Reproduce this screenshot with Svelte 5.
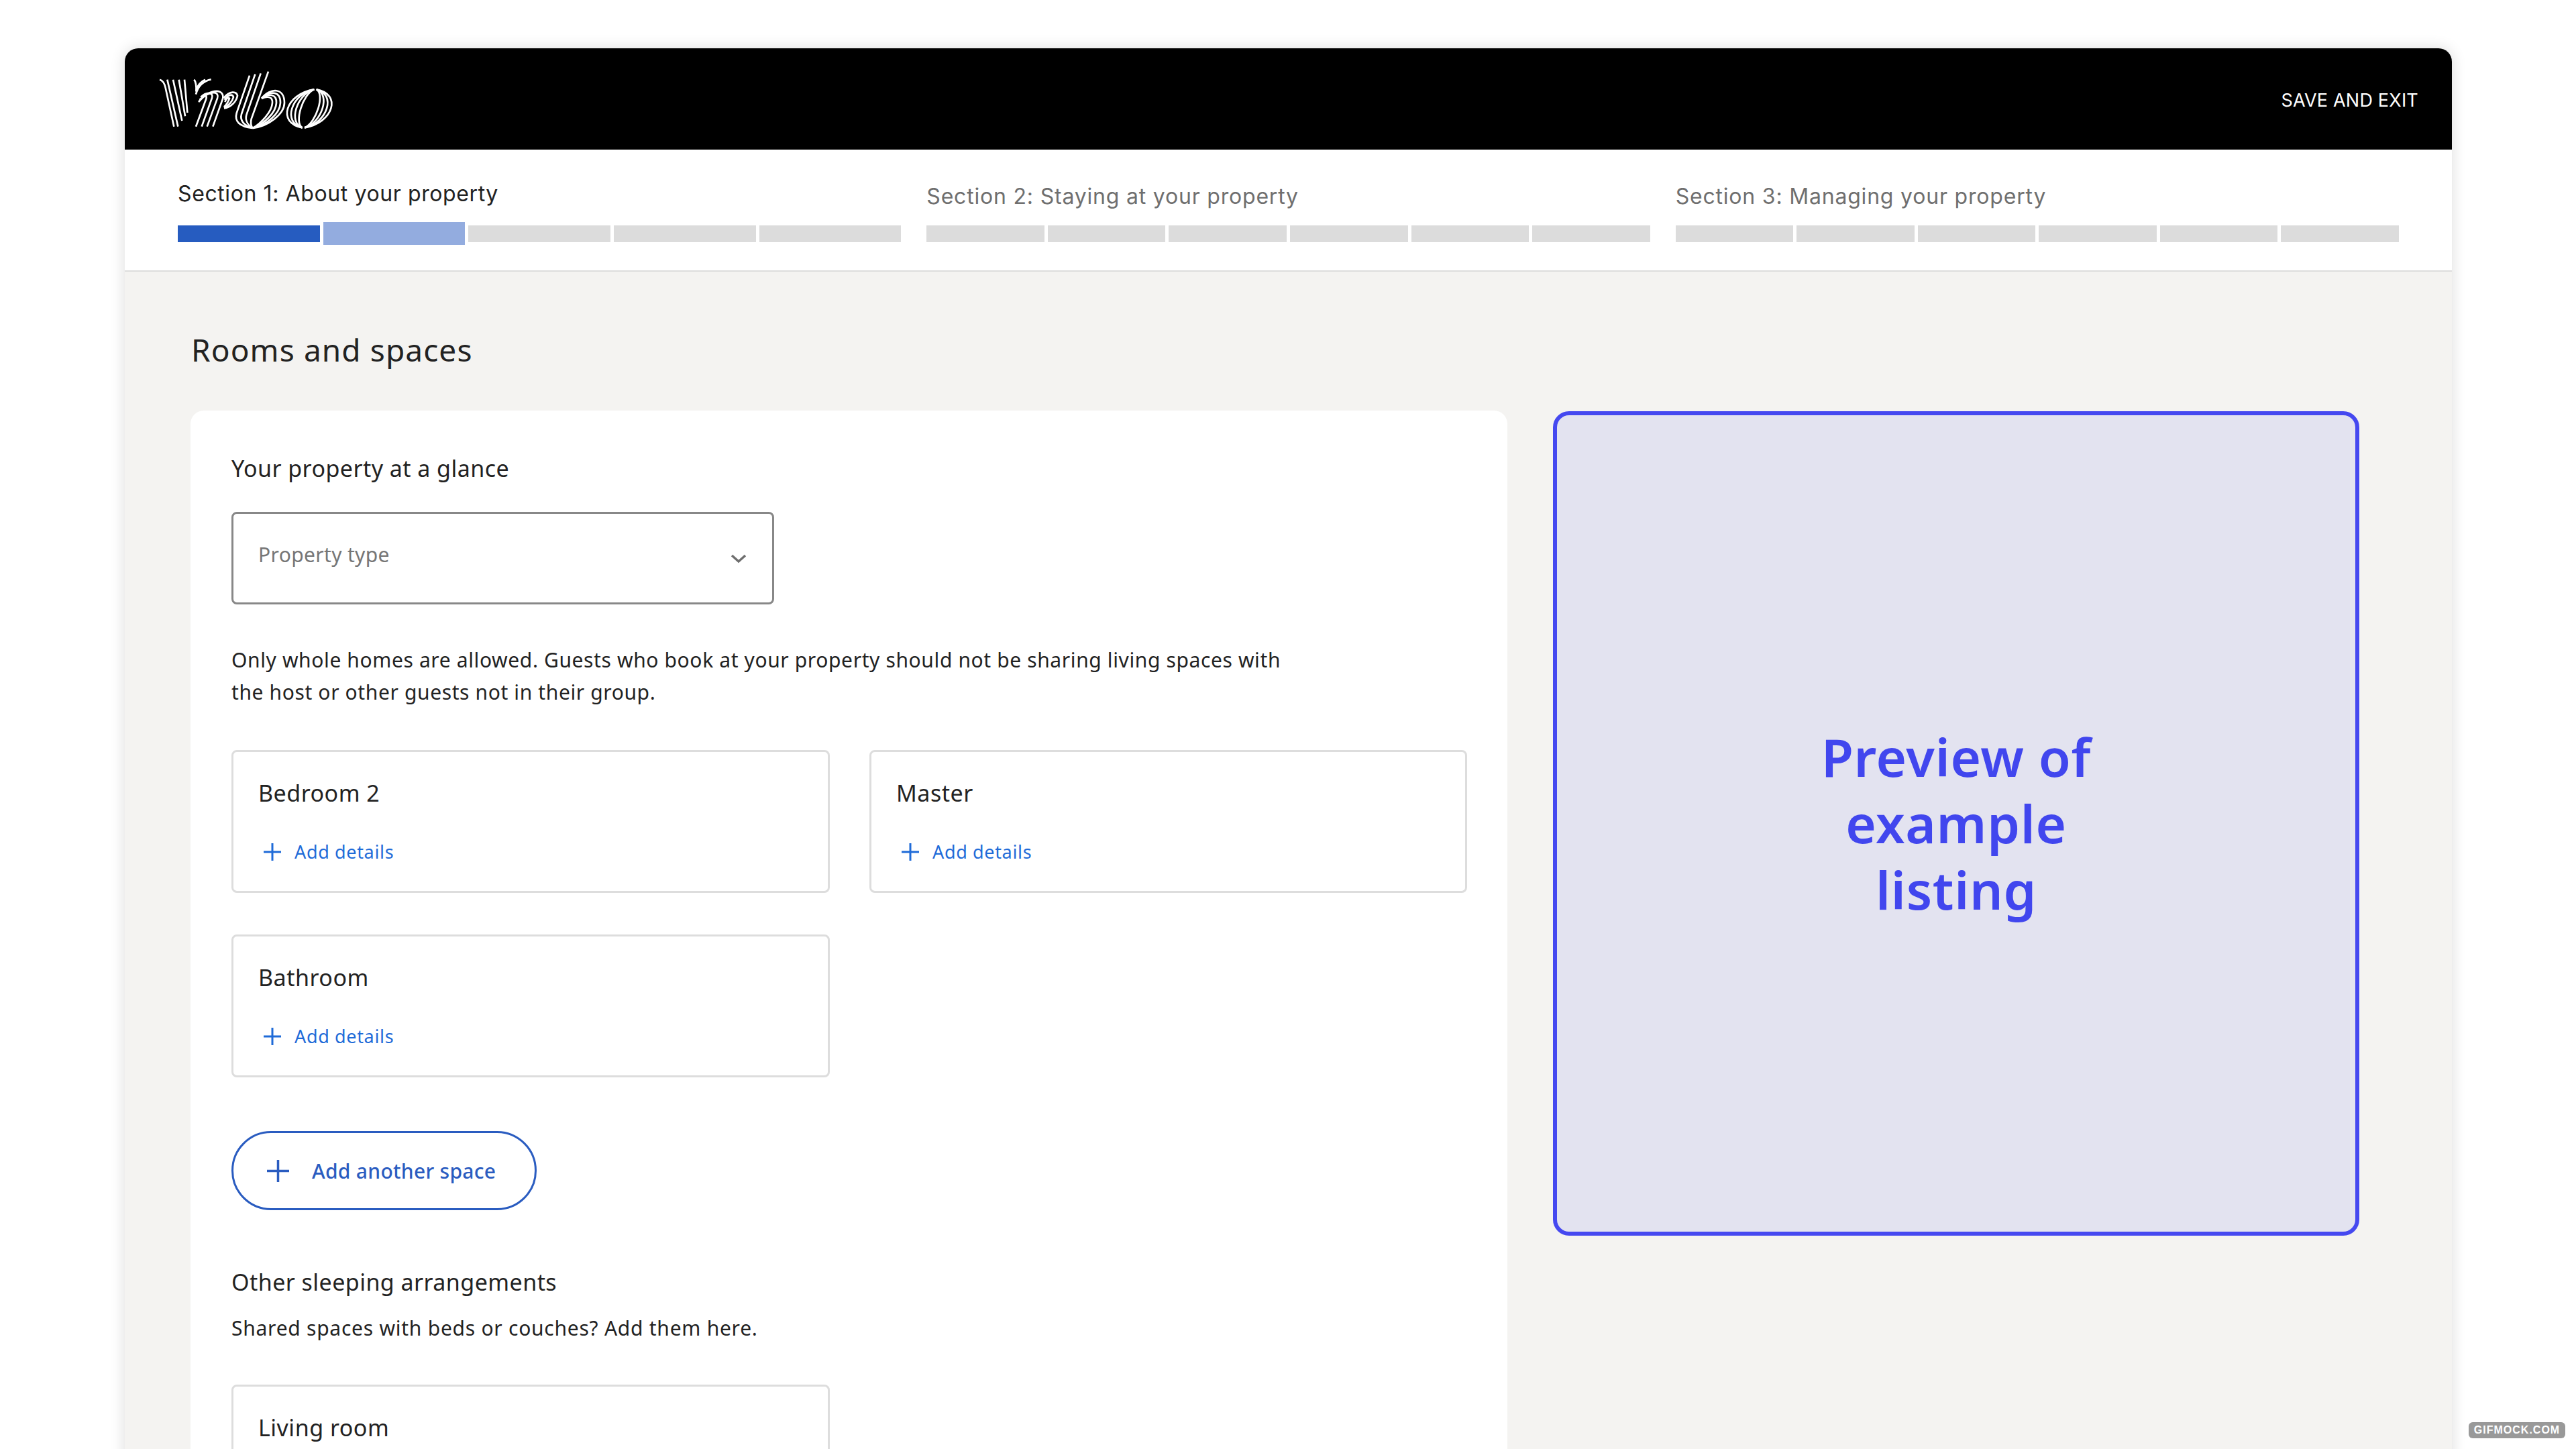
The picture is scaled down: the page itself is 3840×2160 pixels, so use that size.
<script>
  const sections = [
    { label: "Section 1: About your property", segments: 5, done: 1, current: 1 },
    { label: "Section 2: Staying at your property", segments: 6, done: 0, current: -1 },
    { label: "Section 3: Managing your property", segments: 6, done: 0, current: -1 }
  ];
  const spaces = ["Bedroom 2", "Master", "Bathroom"];

  // logo stripes, drawn in a 900x360 box
  const vStripes = [
    "M54 86 C68 90 76 104 80 122 L118 296",
    "M88 86 L136 296",
    "M114 86 L154 270",
    "M140 86 L168 250",
    "M165 86 L178 234",
    "M284 85 C250 92 226 112 216 152",
    "M258 86 C240 94 226 108 218 130",
    "M208 86 C216 96 219 110 217 140"
  ];
  const rStripes = [
    "M216 296 L262 172 C266 158 256 150 240 166",
    "M242 296 L288 168 C296 146 268 136 238 164",
    "M266 296 L312 170 C322 142 290 128 232 176",
    "M292 296 L336 172 C346 132 290 116 228 186",
    "M342 214 C372 210 396 186 402 158 C398 138 368 134 340 168",
    "M342 212 C362 204 380 182 384 164 C380 150 360 152 344 176",
    "M342 208 C354 198 364 178 366 170 C360 164 352 170 346 186"
  ];
  const bStripes = [
    "M456 68 L398 236 C388 272 410 296 470 303",
    "M481 62 L420 240 C412 268 430 292 470 303",
    "M506 58 L442 244 C436 266 446 288 470 303",
    "M540 50 L464 262 C460 278 462 292 470 303",
    "M510 170 C550 120 612 122 612 190 C612 240 540 295 470 303",
    "M510 170 C545 135 595 135 594 190 C592 240 530 290 470 303",
    "M510 170 C540 148 578 148 576 190 C574 235 520 285 470 303",
    "M510 170 C535 160 560 160 558 190 C556 228 510 280 470 303"
  ];

  // stripes of the o, each one a crescent with its widest point at x
  function crescent(x, top, bottom) {
    const sum = (8 * x - top - bottom) / 3;
    return `M${top} 130 C${sum / 2 + 20} 150 ${sum / 2 - 20} 280 ${bottom} 301`;
  }
  const oLeft = [627, 646, 665, 685].map((x) => crescent(x, 745, 692));
  const oRight = [820, 801, 782, 763].map((x) => crescent(x, 755, 702));
  const logo = [...vStripes, ...rStripes, ...bStripes, ...oLeft, ...oRight];
</script>

<div class="page">
  <div class="shell">
    <header class="topbar">
      <svg class="logo" viewBox="0 0 900 360" role="img" aria-label="Vrbo">
        {#each logo as d}
          <path {d} />
        {/each}
      </svg>
      <a class="save" href="#save">SAVE AND EXIT</a>
    </header>

    <nav class="progress">
      {#each sections as section, i}
        <div class="section" class:active={i === 0}>
          <div class="section-label">{section.label}</div>
          <div class="bars">
            {#each Array(section.segments) as _, s}
              <span class="bar" class:done={s < section.done} class:current={s === section.current}></span>
            {/each}
          </div>
        </div>
      {/each}
    </nav>

    <main class="content">
      <h1>Rooms and spaces</h1>
      <div class="columns">
        <section class="card">
          <h2>Your property at a glance</h2>
          <div class="select">
            <span>Property type</span>
            <svg viewBox="0 0 24 14" width="24" height="14">
              <path d="M2 2 L12 11 L22 2" fill="none" stroke="#6f6f6f" stroke-width="3.5" />
            </svg>
          </div>
          <p class="note">Only whole homes are allowed. Guests who book at your property should not be sharing living spaces with<br />the host or other guests not in their group.</p>

          <div class="rooms">
            {#each spaces as space}
              <div class="room">
                <div class="room-name">{space}</div>
                <a class="details" href="#details">
                  <svg viewBox="0 0 26 26" width="26" height="26">
                    <path d="M13 0 V26 M0 13 H26" stroke="#1f6bd8" stroke-width="3" />
                  </svg>
                  Add details
                </a>
              </div>
            {/each}
          </div>

          <button class="add-space">
            <svg viewBox="0 0 33 33" width="33" height="33">
              <path d="M16.5 0 V33 M0 16.5 H33" stroke="#2a5cc0" stroke-width="3.5" />
            </svg>
            Add another space
          </button>

          <h2 class="other">Other sleeping arrangements</h2>
          <p class="shared">Shared spaces with beds or couches? Add them here.</p>

          <div class="rooms">
            <div class="room">
              <div class="room-name">Living room</div>
            </div>
          </div>
        </section>

        <aside class="preview">
          <div>Preview of example listing</div>
        </aside>
      </div>
    </main>
  </div>
  <div class="watermark">GIFMOCK.COM</div>
</div>

<style>
  :global(body) {
    margin: 0;
    background: #fff;
  }

  .page {
    position: relative;
    height: 2160px;
    overflow: hidden;
    box-sizing: border-box;
    padding: 72px 185px 0 186px;
    font-family: "Noto Sans", sans-serif;
    color: #222;
  }

  .shell {
    border-radius: 20px 20px 0 0;
    background: #f4f3f1;
    box-shadow: 0 0 22px rgba(0, 0, 0, 0.14);
    height: 2200px;
  }

  .topbar {
    display: flex;
    justify-content: space-between;
    height: 151px;
    background: #000;
    border-radius: 20px 20px 0 0;
    padding: 0 50px 0 34px;
  }

  .logo {
    width: 300px;
    height: 120px;
    margin-top: 18px;
  }

  .logo path {
    fill: none;
    stroke: #fff;
    stroke-width: 8;
  }

  .save {
    color: #fff;
    text-decoration: none;
    font-family: Inter, sans-serif;
    font-size: 27px;
    letter-spacing: 0.2px;
    line-height: 40px;
    margin-top: 58px;
  }

  .progress {
    display: grid;
    grid-template-columns: repeat(3, 1fr);
    column-gap: 38px;
    align-items: center;
    box-sizing: border-box;
    height: 182px;
    padding: 6px 79px 0;
    background: #fff;
    border-bottom: 2px solid #ddd;
  }

  .section-label {
    font-family: Inter, sans-serif;
    font-size: 32px;
    letter-spacing: 0.8px;
    line-height: 44px;
    margin-bottom: 21px;
    color: #6f6f6f;
  }

  .section.active .section-label {
    color: #222;
    letter-spacing: 0.6px;
    margin-bottom: 20px;
  }

  .bars {
    display: flex;
    align-items: center;
    gap: 5px;
    height: 25px;
  }

  .section.active .bars {
    height: 34px;
  }

  .bar {
    flex: 1;
    height: 25px;
    background: #dcdcdc;
  }

  .bar.done {
    background: #265cc0;
  }

  .bar.current {
    height: 34px;
    background: #93acdf;
  }

  .content {
    padding: 86px 0 0 98px;
  }

  h1 {
    margin: 0 0 61px 1px;
    font-size: 46px;
    line-height: 60px;
    font-weight: 400;
    letter-spacing: 1.1px;
  }

  .columns {
    display: flex;
    align-items: flex-start;
    gap: 68px;
  }

  .card {
    box-sizing: border-box;
    width: 1963px;
    padding: 64px 60px 60px 61px;
    background: #fff;
    border-radius: 20px;
  }

  h2 {
    margin: 0;
    font-size: 34px;
    line-height: 44px;
    font-weight: 400;
    letter-spacing: 0.45px;
  }

  .select {
    display: flex;
    justify-content: space-between;
    box-sizing: border-box;
    width: 809px;
    height: 138px;
    margin-top: 43px;
    padding: 41px 38px 0 37px;
    border: 3px solid #888;
    border-radius: 8px;
    color: #767676;
    font-size: 30px;
    letter-spacing: 0.35px;
    line-height: 40px;
  }

  .select svg {
    margin-top: 19px;
  }

  .note {
    margin: 59px 0 62px;
    font-size: 30px;
    letter-spacing: 0.62px;
    line-height: 48px;
  }

  .rooms {
    display: grid;
    grid-template-columns: 892px 891px;
    gap: 62px 59px;
  }

  .room {
    box-sizing: border-box;
    height: 213px;
    padding: 39px 37px 0;
    border: 3px solid #ddd;
    border-radius: 8px;
    background: #fff;
  }

  .room-name {
    font-size: 34px;
    letter-spacing: 0.5px;
    line-height: 44px;
  }

  .details {
    display: flex;
    align-items: center;
    gap: 20px;
    margin: 46px 0 0 8px;
    color: #1f6bd8;
    text-decoration: none;
    font-size: 27px;
    letter-spacing: 0.65px;
    line-height: 40px;
  }

  .add-space {
    display: flex;
    align-items: center;
    gap: 34px;
    box-sizing: border-box;
    width: 455px;
    height: 118px;
    margin-top: 80px;
    padding: 0 0 0 50px;
    border: 3px solid #2a5cc0;
    border-radius: 59px;
    background: #fff;
    color: #2a5cc0;
    font-family: inherit;
    font-size: 30px;
    font-weight: 500;
    letter-spacing: 0.3px;
  }

  .other {
    margin-top: 85px;
  }

  .shared {
    margin: 25px 0 62px;
    font-size: 30px;
    letter-spacing: 0.75px;
    line-height: 44px;
  }

  .preview {
    display: flex;
    align-items: center;
    justify-content: center;
    box-sizing: border-box;
    width: 1202px;
    height: 1229px;
    margin-top: 1px;
    border: 6px solid #4548f0;
    border-radius: 24px;
    background: #e3e3f0;
    color: #4146ee;
    font-size: 78px;
    font-weight: 600;
    letter-spacing: 0.7px;
    line-height: 99px;
    text-align: center;
  }

  .preview div {
    width: 480px;
  }

  .watermark {
    position: absolute;
    left: 3680px;
    top: 2120px;
    width: 144px;
    height: 24px;
    border-radius: 6px;
    background: #999;
    color: #fff;
    font-family: "Liberation Sans", sans-serif;
    font-size: 16px;
    font-weight: 700;
    letter-spacing: 1px;
    line-height: 24px;
    text-align: center;
  }
</style>
